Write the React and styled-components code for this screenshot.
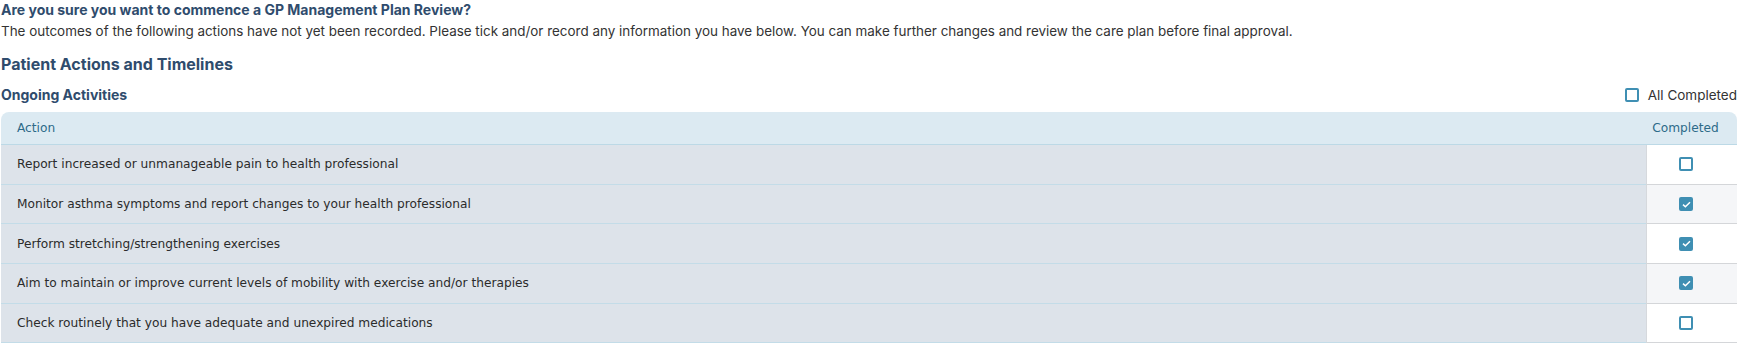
import React, { useState } from "react";
import styled, { createGlobalStyle } from "styled-components";

const Global = createGlobalStyle`
  html, body { margin: 0; padding: 0; background: #ffffff; }
  body { font-family: Inter, "Noto Sans", sans-serif; color: #333; }
  * { box-sizing: border-box; }
`;

const Page = styled.div`
  padding: 1px 6px 0 1px;
  display: flex;
  flex-direction: column;
`;

const Title = styled.h1`
  margin: 0;
  font-size: 14px;
  line-height: 18px;
  font-weight: 700;
  color: #2f4c6d;
`;

const Intro = styled.p`
  margin: 3px 0 0;
  font-size: 13.43px;
  line-height: 18px;
  color: #333;
`;

const SectionTitle = styled.h2`
  margin: 13px 0 0;
  font-size: 16px;
  line-height: 22px;
  font-weight: 700;
  color: #2f4c6d;
`;

const SubBar = styled.div`
  margin-top: 11px;
  display: flex;
  align-items: center;
  justify-content: space-between;
  height: 18px;
`;

const SubTitle = styled.h3`
  margin: 0;
  font-size: 14px;
  line-height: 18px;
  font-weight: 700;
  color: #2f4c6d;
`;

const AllLabel = styled.label`
  display: flex;
  align-items: center;
  gap: 9px;
  font-size: 13.5px;
  color: #333;
  cursor: pointer;
`;

const Table = styled.div`
  margin-top: 8px;
  display: grid;
  grid-template-columns: 1fr 91px;
  border-radius: 8px 8px 0 0;
  overflow: hidden;
  font-family: "DejaVu Sans", Verdana, sans-serif;
  font-size: 12.2px;
`;

const HeadCell = styled.div`
  height: 33px;
  background: #dceaf2;
  border-bottom: 1px solid #bcd9e6;
  color: #2d6a89;
  display: flex;
  align-items: center;
  justify-content: ${(p) => (p.$center ? "center" : "flex-start")};
  padding: ${(p) => (p.$center ? "0 12px 0 0" : "0 0 0 16px")};
`;

const ActionCell = styled.div`
  height: 39.7px;
  background: #dde3ea;
  border-bottom: 1px solid #c3dce8;
  color: #2b2b2b;
  display: flex;
  align-items: center;
  padding-left: 16px;
`;

const CheckCell = styled.div`
  height: 39.7px;
  background: ${(p) => (p.$alt ? "#f5f6f8" : "#ffffff")};
  border-left: 1px solid #d6d9dd;
  border-bottom: 1px solid #d4d6d9;
  display: flex;
  align-items: center;
  justify-content: center;
  padding-right: 12px;
`;

const Box = styled.span`
  width: 14px;
  height: 14px;
  border-radius: 2px;
  border: 2px solid #3f8fb3;
  background: ${(p) => (p.$checked ? "#3f8fb3" : "#ffffff")};
  display: inline-flex;
  align-items: center;
  justify-content: center;
  flex-shrink: 0;
`;

function Check({ checked, onClick }) {
  return (
    <Box $checked={checked} onClick={onClick} role="checkbox" aria-checked={checked}>
      {checked && (
        <svg width="9" height="7" viewBox="0 0 9 7">
          <path d="M1 3.6 L3.4 5.8 L8 1.2" fill="none" stroke="#fff" strokeWidth="1.5" />
        </svg>
      )}
    </Box>
  );
}

const initial = [
  { text: "Report increased or unmanageable pain to health professional", done: false },
  { text: "Monitor asthma symptoms and report changes to your health professional", done: true },
  { text: "Perform stretching/strengthening exercises", done: true },
  { text: "Aim to maintain or improve current levels of mobility with exercise and/or therapies", done: true },
  { text: "Check routinely that you have adequate and unexpired medications", done: false },
];

export default function App() {
  const [rows, setRows] = useState(initial);
  const all = rows.every((r) => r.done);
  const toggle = (i) =>
    setRows((rs) => rs.map((r, j) => (j === i ? { ...r, done: !r.done } : r)));
  return (
    <>
      <Global />
      <Page>
        <Title>Are you sure you want to commence a GP Management Plan Review?</Title>
        <Intro>
          The outcomes of the following actions have not yet been recorded. Please tick and/or record any information you have below. You can make further changes and review the care plan before final approval.
        </Intro>
        <SectionTitle>Patient Actions and Timelines</SectionTitle>
        <SubBar>
          <SubTitle>Ongoing Activities</SubTitle>
          <AllLabel>
            <Check
              checked={all}
              onClick={() => setRows((rs) => rs.map((r) => ({ ...r, done: !all })))}
            />
            All Completed
          </AllLabel>
        </SubBar>
        <Table>
          <HeadCell>Action</HeadCell>
          <HeadCell $center>Completed</HeadCell>
          {rows.map((r, i) => (
            <React.Fragment key={i}>
              <ActionCell>{r.text}</ActionCell>
              <CheckCell $alt={i % 2 === 1}>
                <Check checked={r.done} onClick={() => toggle(i)} />
              </CheckCell>
            </React.Fragment>
          ))}
        </Table>
      </Page>
    </>
  );
}
